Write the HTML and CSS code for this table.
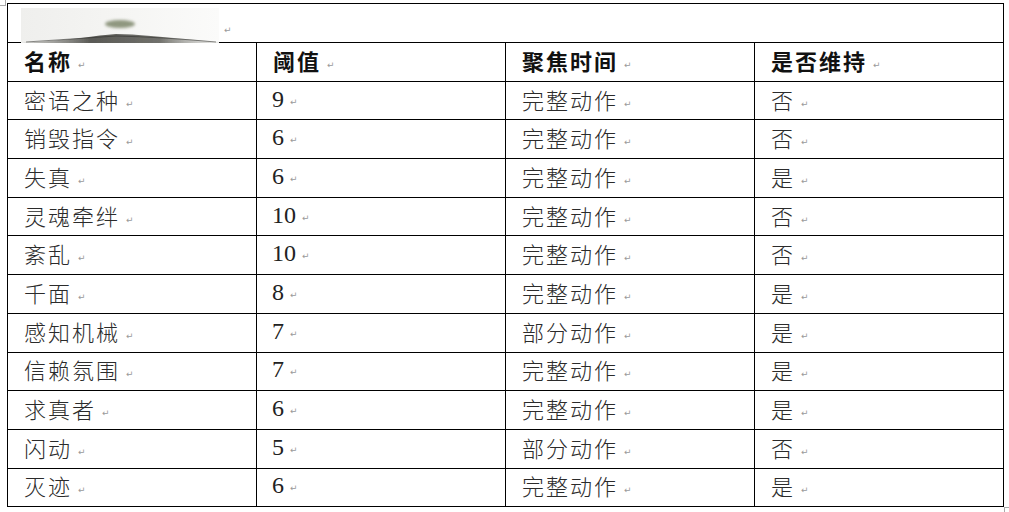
FILE: index.html
```html
<!DOCTYPE html>
<html lang="zh-CN">
<head>
<meta charset="utf-8">
<title>表格</title>
<link rel="stylesheet" href="styles.css">
</head>
<body>
<span class="corner-tl"></span>
<table class="sheet">
  <colgroup><col class="c"><col class="c"><col class="c"><col class="c"></colgroup>
  <tr class="banner-row">
    <td colspan="4" class="banner">
      <div class="banner-inner">
        <svg class="ink" width="198" height="35" viewBox="0 0 198 35">
          <defs>
            <linearGradient id="bg" x1="0" y1="0" x2="1" y2="0">
              <stop offset="0" stop-color="#efefed"/>
              <stop offset="0.5" stop-color="#f5f5f3"/>
              <stop offset="1" stop-color="#fbfbfa"/>
            </linearGradient>
            <linearGradient id="ridge" x1="0" y1="0" x2="1" y2="0">
              <stop offset="0" stop-color="#9a9a96" stop-opacity="0.5"/>
              <stop offset="0.35" stop-color="#3f3f3a"/>
              <stop offset="0.7" stop-color="#5a5a54"/>
              <stop offset="1" stop-color="#b5b5b0" stop-opacity="0.3"/>
            </linearGradient>
            <filter id="blur" x="-50%" y="-50%" width="200%" height="200%"><feGaussianBlur stdDeviation="1.8"/></filter>
            <filter id="blur2"><feGaussianBlur stdDeviation="0.6"/></filter>
          </defs>
          <rect x="0" y="0" width="198" height="35" fill="url(#bg)"/>
          <ellipse cx="99" cy="16" rx="15" ry="4" fill="#8f977f" filter="url(#blur)"/>
          <path d="M0 35 Q30 33 60 30 Q80 27 95 26 Q110 26 130 28 Q165 31 198 34 L198 35 L0 35 Z" fill="url(#ridge)" filter="url(#blur2)" opacity="0.85"/>
          <path d="M5 34 Q50 31 95 28 Q140 29 195 34" stroke="#2e2e2a" stroke-width="1" fill="none" opacity="0.55"/>
        </svg>
        <span class="pm">↵</span>
      </div>
    </td>
  </tr>
  <tr class="head">
    <td>名称<span class="pm">↵</span></td>
    <td>阈值<span class="pm">↵</span></td>
    <td>聚焦时间<span class="pm">↵</span></td>
    <td>是否维持<span class="pm">↵</span></td>
  </tr>
  <tr><td>密语之种<span class="pm">↵</span></td><td class="num">9<span class="pm">↵</span></td><td>完整动作<span class="pm">↵</span></td><td>否<span class="pm">↵</span></td></tr>
  <tr><td>销毁指令<span class="pm">↵</span></td><td class="num">6<span class="pm">↵</span></td><td>完整动作<span class="pm">↵</span></td><td>否<span class="pm">↵</span></td></tr>
  <tr><td>失真<span class="pm">↵</span></td><td class="num">6<span class="pm">↵</span></td><td>完整动作<span class="pm">↵</span></td><td>是<span class="pm">↵</span></td></tr>
  <tr><td>灵魂牵绊<span class="pm">↵</span></td><td class="num">10<span class="pm">↵</span></td><td>完整动作<span class="pm">↵</span></td><td>否<span class="pm">↵</span></td></tr>
  <tr><td>紊乱<span class="pm">↵</span></td><td class="num">10<span class="pm">↵</span></td><td>完整动作<span class="pm">↵</span></td><td>否<span class="pm">↵</span></td></tr>
  <tr><td>千面<span class="pm">↵</span></td><td class="num">8<span class="pm">↵</span></td><td>完整动作<span class="pm">↵</span></td><td>是<span class="pm">↵</span></td></tr>
  <tr><td>感知机械<span class="pm">↵</span></td><td class="num">7<span class="pm">↵</span></td><td>部分动作<span class="pm">↵</span></td><td>是<span class="pm">↵</span></td></tr>
  <tr><td>信赖氛围<span class="pm">↵</span></td><td class="num">7<span class="pm">↵</span></td><td>完整动作<span class="pm">↵</span></td><td>是<span class="pm">↵</span></td></tr>
  <tr><td>求真者<span class="pm">↵</span></td><td class="num">6<span class="pm">↵</span></td><td>完整动作<span class="pm">↵</span></td><td>是<span class="pm">↵</span></td></tr>
  <tr><td>闪动<span class="pm">↵</span></td><td class="num">5<span class="pm">↵</span></td><td>部分动作<span class="pm">↵</span></td><td>否<span class="pm">↵</span></td></tr>
  <tr><td>灭迹<span class="pm">↵</span></td><td class="num">6<span class="pm">↵</span></td><td>完整动作<span class="pm">↵</span></td><td>是<span class="pm">↵</span></td></tr>
</table>
<span class="corner-br"></span>
</body>
</html>
```
FILE: styles.css
```css
html, body {
  margin: 0;
  padding: 0;
  background: #ffffff;
}
body {
  position: relative;
  width: 1009px;
  height: 512px;
  overflow: hidden;
  padding: 3px 0 0 7px;
  box-sizing: border-box;
  font-family: "Noto Sans CJK SC", "Noto Sans", sans-serif;
}
.sheet {
  border-collapse: collapse;
  table-layout: fixed;
  width: 997px;
}
.c { width: 249px; }
.sheet td {
  border: 1px solid #000;
  height: 38.7px;
  padding: 0 0 4px 16px;
  box-sizing: border-box;
  font-size: 22px;
  font-weight: 300;
  letter-spacing: 2px;
  color: #2b2b2b;
  line-height: 1;
  white-space: nowrap;
  vertical-align: middle;
}
.sheet .head td {
  font-weight: 700;
  color: #111;
}
.sheet td.num {
  font-family: "Liberation Serif", serif;
  font-size: 24px;
  font-weight: 400;
  letter-spacing: 0;
  padding-left: 15px;
  color: #222;
}
.sheet td.banner {
  padding: 0 0 0 13px;
  height: 39px;
}
.banner-inner {
  display: flex;
  align-items: flex-end;
  height: 37px;
}
.ink { display: block; margin-bottom: -1px; }
.banner .pm { margin-left: 5px; margin-bottom: 12px; }
.pm {
  font-family: "DejaVu Sans", sans-serif;
  font-size: 9px;
  font-weight: 400;
  line-height: 0;
  color: #9a9a9a;
  letter-spacing: 0;
  margin-left: 6px;
  vertical-align: 2px;
}
.corner-tl {
  position: absolute;
  left: 0;
  top: 0;
  width: 5px;
  height: 5px;
  border-right: 1px solid #aaa;
  border-bottom: 1px solid #aaa;
}
.corner-br {
  position: absolute;
  left: 1004px;
  top: 507px;
  width: 5px;
  height: 5px;
  border-left: 1px solid #aaa;
  border-top: 1px solid #aaa;
}
```
